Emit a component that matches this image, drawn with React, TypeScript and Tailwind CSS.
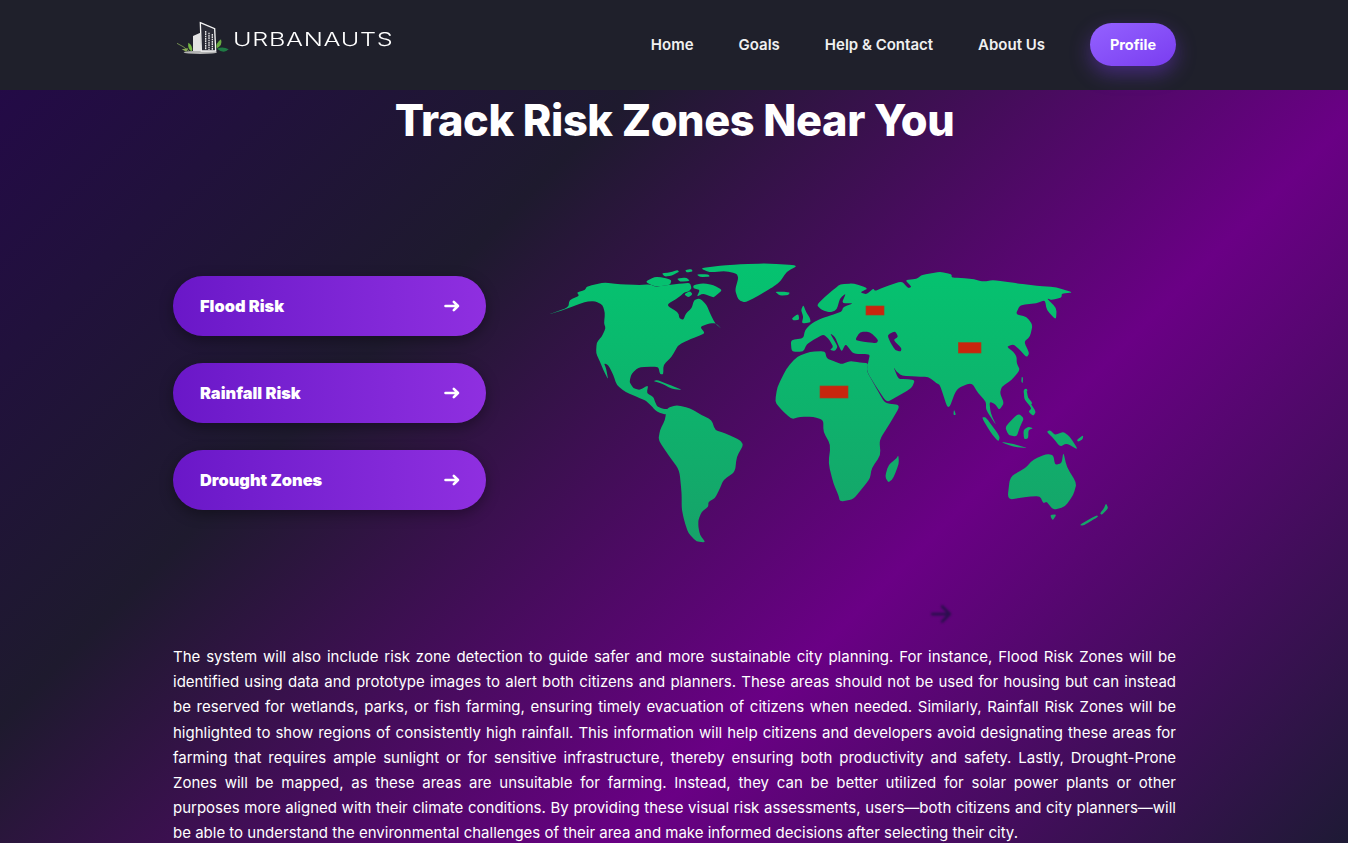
const links = ['Home', 'Goals', 'Help & Contact', 'About Us'];
const risks = ['Flood Risk', 'Rainfall Risk', 'Drought Zones'];

const copy = [
    'The system will also include risk zone detection to guide safer and more sustainable city planning. For instance, Flood Risk Zones will be',
    'identified using data and prototype images to alert both citizens and planners. These areas should not be used for housing but can instead',
    'be reserved for wetlands, parks, or fish farming, ensuring timely evacuation of citizens when needed. Similarly, Rainfall Risk Zones will be',
    'highlighted to show regions of consistently high rainfall. This information will help citizens and developers avoid designating these areas for',
    'farming that requires ample sunlight or for sensitive infrastructure, thereby ensuring both productivity and safety. Lastly, Drought-Prone',
    'Zones will be mapped, as these areas are unsuitable for farming. Instead, they can be better utilized for solar power plants or other',
    'purposes more aligned with their climate conditions. By providing these visual risk assessments, users—both citizens and city planners—will',
];

// traced at 3x, origin of the map box
const land = [
    // north america
    '18,181 85,157 88,135 118,122 110,112 135,105 140,95 190,82 240,88 300,90 330,88 345,95 385,90 430,85 450,84 455,100 445,110 432,112 420,125 378,150 415,172 418,190 430,195 438,175 455,160 462,135 480,130 500,150 510,175 525,205 545,222 528,205 510,205 480,215 495,235 470,245 445,255 415,270 395,305 370,330 370,358 360,358 355,335 320,335 295,338 275,355 268,380 280,400 300,405 325,390 320,415 340,425 345,440 352,455 370,462 385,462 380,480 350,470 338,457 318,437 300,430 255,410 230,390 220,360 205,330 192,325 198,340 205,375 190,345 180,320 168,295 170,262 185,245 197,220 192,205 195,175 188,150 165,138 135,140 85,160',
    // arctic
    '315,80 345,65 370,68 395,75 390,90 345,95', '365,55 390,52 412,45 418,50 395,62 375,65', '410,70 440,68 450,78 420,80',
    '435,45 455,42 458,50 440,52', '460,90 490,85 520,90 547,105 530,120 520,128 490,115 470,125 480,105 460,100', '432,118 450,108 458,118 445,127',
    '470,58 505,58 510,65 480,66',
    // greenland, iceland, uk
    '480,40 540,32 600,28 680,25 775,31 740,50 720,80 700,95 650,125 615,143 595,135 585,105 595,70 590,55 555,48 510,52',
    '705,110 725,110 750,112 745,120 720,122', '755,190 775,176 778,195 760,196', '783,165 790,150 798,170 810,190 812,202 785,206 790,185',
    // eurasia
    '752,255 790,250 795,225 815,205 845,190 870,182 905,170 910,155 942,145 905,145 918,115 900,130 890,165 870,172 845,165 830,150 855,125 885,100 900,88 940,85 985,100 960,112 980,118 1000,100 1005,108 1030,97 1085,78 1105,100 1115,95 1095,75 1130,72 1145,60 1200,50 1235,58 1235,68 1290,70 1330,80 1360,75 1430,85 1490,92 1550,97 1600,113 1565,115 1565,128 1535,135 1520,130 1550,160 1548,195 1520,165 1515,135 1490,145 1440,150 1427,178 1460,185 1478,210 1470,245 1452,260 1468,295 1460,307 1435,280 1420,268 1400,275 1420,290 1430,305 1430,325 1440,345 1415,375 1385,395 1380,415 1392,445 1378,465 1365,447 1348,440 1352,475 1370,513 1338,465 1338,440 1315,415 1295,383 1250,400 1225,467 1200,390 1190,385 1165,365 1130,365 1085,362 1070,350 1060,335 1075,372 1095,372 1125,375 1115,400 1070,425 1040,443 1005,390 980,348 985,320 990,297 940,297 920,270 915,270 905,290 895,270 885,245 870,235 885,260 893,275 885,288 870,285 880,275 865,250 850,238 820,255 800,268 790,290 755,290',
    // africa
    '705,440 712,395 740,340 770,305 810,290 855,288 860,310 880,318 905,328 930,318 960,322 985,325 980,348 995,375 1015,410 1035,445 1082,450 1050,505 1018,555 1022,600 995,640 990,670 975,690 940,733 900,740 895,720 880,685 865,625 872,570 850,530 850,495 820,485 780,485 755,493 720,460',
    // madagascar, caribbean
    '1075,600 1077,625 1060,670 1045,683 1035,665 1045,630 1070,610', '340,378 352,375 395,392 428,405 395,402 365,385',
    // south america
    '380,460 410,450 450,460 485,480 515,495 525,525 555,535 600,555 610,570 590,605 585,650 550,675 540,700 525,730 505,740 505,755 485,770 475,795 475,815 480,840 497,862 470,860 445,835 435,805 430,785 425,760 425,715 418,645 385,600 355,555 360,525 375,495',
    // asia islands
    '1445,365 1449,368 1448,385 1444,380', '1455,405 1462,425 1478,445 1470,450 1452,432', '1450,405 1460,400 1463,410',
    '1242,463 1248,480 1240,480', '1450,405 1460,405 1465,435 1488,470 1480,483 1465,470 1475,460 1455,435',
    '1325,487 1338,487 1380,545 1375,560 1350,530', '1395,515 1435,475 1452,490 1440,515 1430,545 1405,540', '1380,560 1420,567 1465,580 1420,575',
    '1450,525 1465,515 1480,520 1465,525 1465,550 1452,553', '1520,530 1530,525 1545,540 1570,530 1590,545 1615,585 1580,565 1560,575 1540,550',
    '1610,555 1630,540 1628,553 1615,560',
    // australia, tasmania, nz
    '1402,735 1410,665 1455,640 1480,613 1520,597 1540,600 1545,630 1565,625 1570,590 1580,635 1610,685 1600,720 1575,755 1540,765 1520,740 1510,745 1500,723 1460,725',
    '1530,780 1550,778 1538,797', '1618,810 1670,780 1675,785 1630,812', '1680,775 1692,760 1698,745 1705,760 1685,780',
];

const water = [
    // black sea, caspian
    '945,255 960,230 990,230 1015,255 1010,265 970,260', '1042,240 1065,228 1075,245 1060,255 1085,280 1082,290 1065,285 1050,260',
];

const pins = [
    { x: 978, y: 153, w: 54, h: 27 },
    { x: 1255, y: 263, w: 68, h: 31 },
    { x: 840, y: 393, w: 84, h: 36 },
];

// rounds the corners of a traced outline so coasts don't look cut with a ruler
function coast(points: string) {
    const pts = points.split(' ').map((p) => p.split(',').map(Number));
    const cut = 0.3;
    let d = '';
    pts.forEach((v, i) => {
        const prev = pts[(i - 1 + pts.length) % pts.length];
        const next = pts[(i + 1) % pts.length];
        const ax = v[0] + (prev[0] - v[0]) * cut;
        const ay = v[1] + (prev[1] - v[1]) * cut;
        const bx = v[0] + (next[0] - v[0]) * cut;
        const by = v[1] + (next[1] - v[1]) * cut;
        d += `${i === 0 ? 'M' : 'L'}${ax} ${ay}Q${v[0]} ${v[1]} ${bx} ${by}`;
    });
    return d + 'Z';
}

function Logo() {
    return (
        <svg width="54" height="35" viewBox="50 55 160 105" className="shrink-0">
            <ellipse cx="122" cy="149" rx="50" ry="5" fill="#b5b5b5" />
            <path d="M122 60 L165 78 L168 145 L125 145 Z" fill="#2a2b36" stroke="#f4f4f4" strokeWidth="4" />
            <path d="M100 100 L122 90 L125 145 L100 145 Z" fill="#e4e4e4" />
            <path d="M138 85 V142 M148 90 V142 M158 94 V142" stroke="#e8e8e8" strokeWidth="4" strokeDasharray="5 2" />
            <path d="M52 122 Q70 130 88 145" stroke="#7f9f55" strokeWidth="2.5" fill="none" />
            <path d="M86 120 Q100 128 97 146 Q83 140 86 120 Z" fill="#76b844" />
            <path d="M184 110 Q190 128 171 137 Q167 122 184 110 Z" fill="#6aac42" />
            <path d="M172 138 Q190 130 207 140 Q192 155 172 138 Z" fill="#1f7a44" />
            <path d="M66 140 L86 137 L80 147 Z" fill="#8aaa55" />
        </svg>
    );
}

function WorldMap() {
    return (
        <svg width="580" height="300" viewBox="0 0 1740 900" className="shrink-0">
            <defs>
                <linearGradient id="landFill" gradientUnits="userSpaceOnUse" x1="0" y1="0" x2="0" y2="880">
                    <stop offset="0" stopColor="#04c470" />
                    <stop offset="1" stopColor="#17a269" />
                </linearGradient>
                <mask id="landMask" maskUnits="userSpaceOnUse" x="0" y="0" width="1740" height="900">
                    <g fill="#fff">
                        {land.map((p) => <path key={p} d={coast(p)} />)}
                    </g>
                    <g fill="#000">
                        {water.map((p) => <path key={p} d={coast(p)} />)}
                    </g>
                </mask>
            </defs>
            <rect width="1740" height="900" fill="url(#landFill)" mask="url(#landMask)" />
            {pins.map((p) => (
                <rect key={p.x} x={p.x} y={p.y} width={p.w} height={p.h} fill="#c8260e" stroke="#a8401c" strokeWidth="2" />
            ))}
        </svg>
    );
}

export default function App() {
    return (
        <div className="h-[843px] overflow-hidden bg-[linear-gradient(135deg,#24084a_0%,#1e1a2e_33%,#6a0085_67%,#1e1a35_100%)] text-white font-['Inter',sans-serif]">
            {/* Navbar */}
            <header className="h-[90px] bg-[#1f202b] pl-[173px] pr-[172px] flex items-start justify-between">
                <div className="flex items-center gap-[3px] mt-[18px] ml-[3px] h-[40px]">
                    <Logo />
                    <span className="text-[18px] font-light tracking-[0.5px] text-white leading-none origin-left scale-x-[1.4] mt-[3px]">URBANAUTS</span>
                </div>
                <nav className="flex items-center gap-[45px] mt-[23px]">
                    {links.map((link) => (
                        <a key={link} className="text-[15px] leading-[22px] font-semibold text-[#f0f0f0] mt-[1px]">{link}</a>
                    ))}
                    <button className="w-[86px] h-[43px] rounded-full bg-gradient-to-br from-[#9461ff] to-[#7a3cf0] text-[14.5px] font-bold shadow-[0_8px_20px_rgba(124,58,237,0.4)]">
                        Profile
                    </button>
                </nav>
            </header>

            <main className="pl-[173px] pr-[172px]">
                <h1 className="text-center text-[43.3px] font-extrabold leading-[60px] tracking-[-0.4px]">Track Risk Zones Near You</h1>

                {/* Risk list and map */}
                <section className="flex items-start gap-[54px] mt-[105px]">
                    <div className="w-[313px] shrink-0 flex flex-col gap-[27px] mt-[21px]">
                        {risks.map((risk) => (
                            <button key={risk} className="h-[60px] rounded-[30px] pl-[27px] pr-[26px] flex items-center justify-between bg-gradient-to-r from-[#6a17c8] to-[#8f2fe0] shadow-[0_4px_14px_rgba(0,0,0,0.35)]">
                                <span className="text-[16.4px] font-black">{risk}</span>
                                <svg width="16" height="16" viewBox="0 0 16 16" fill="none" stroke="currentColor" strokeWidth="2.6" strokeLinecap="round" strokeLinejoin="round">
                                    <path d="M1.5 8H14M9.8 3.8L14 8L9.8 12.2" />
                                </svg>
                            </button>
                        ))}
                    </div>
                    <WorldMap />
                </section>

                <div className="mt-[49px] pl-[753px] h-[20px]">
                    <svg width="30" height="30" viewBox="0 0 24 24" fill="none" stroke="#2b0f4e" strokeWidth="2.2" strokeLinecap="round" strokeLinejoin="round" className="-mt-[5px] blur-[0.8px]">
                        <path d="M5 12h14M13 6l6 6-6 6" />
                    </svg>
                </div>

                <div className="mt-[25px] text-[15px] leading-[25.2px] text-white">
                    {copy.map((line) => (
                        <p key={line} className="text-justify [text-align-last:justify]">{line}</p>
                    ))}
                    <p>be able to understand the environmental challenges of their area and make informed decisions after selecting their city.</p>
                </div>
            </main>
        </div>
    );
}
